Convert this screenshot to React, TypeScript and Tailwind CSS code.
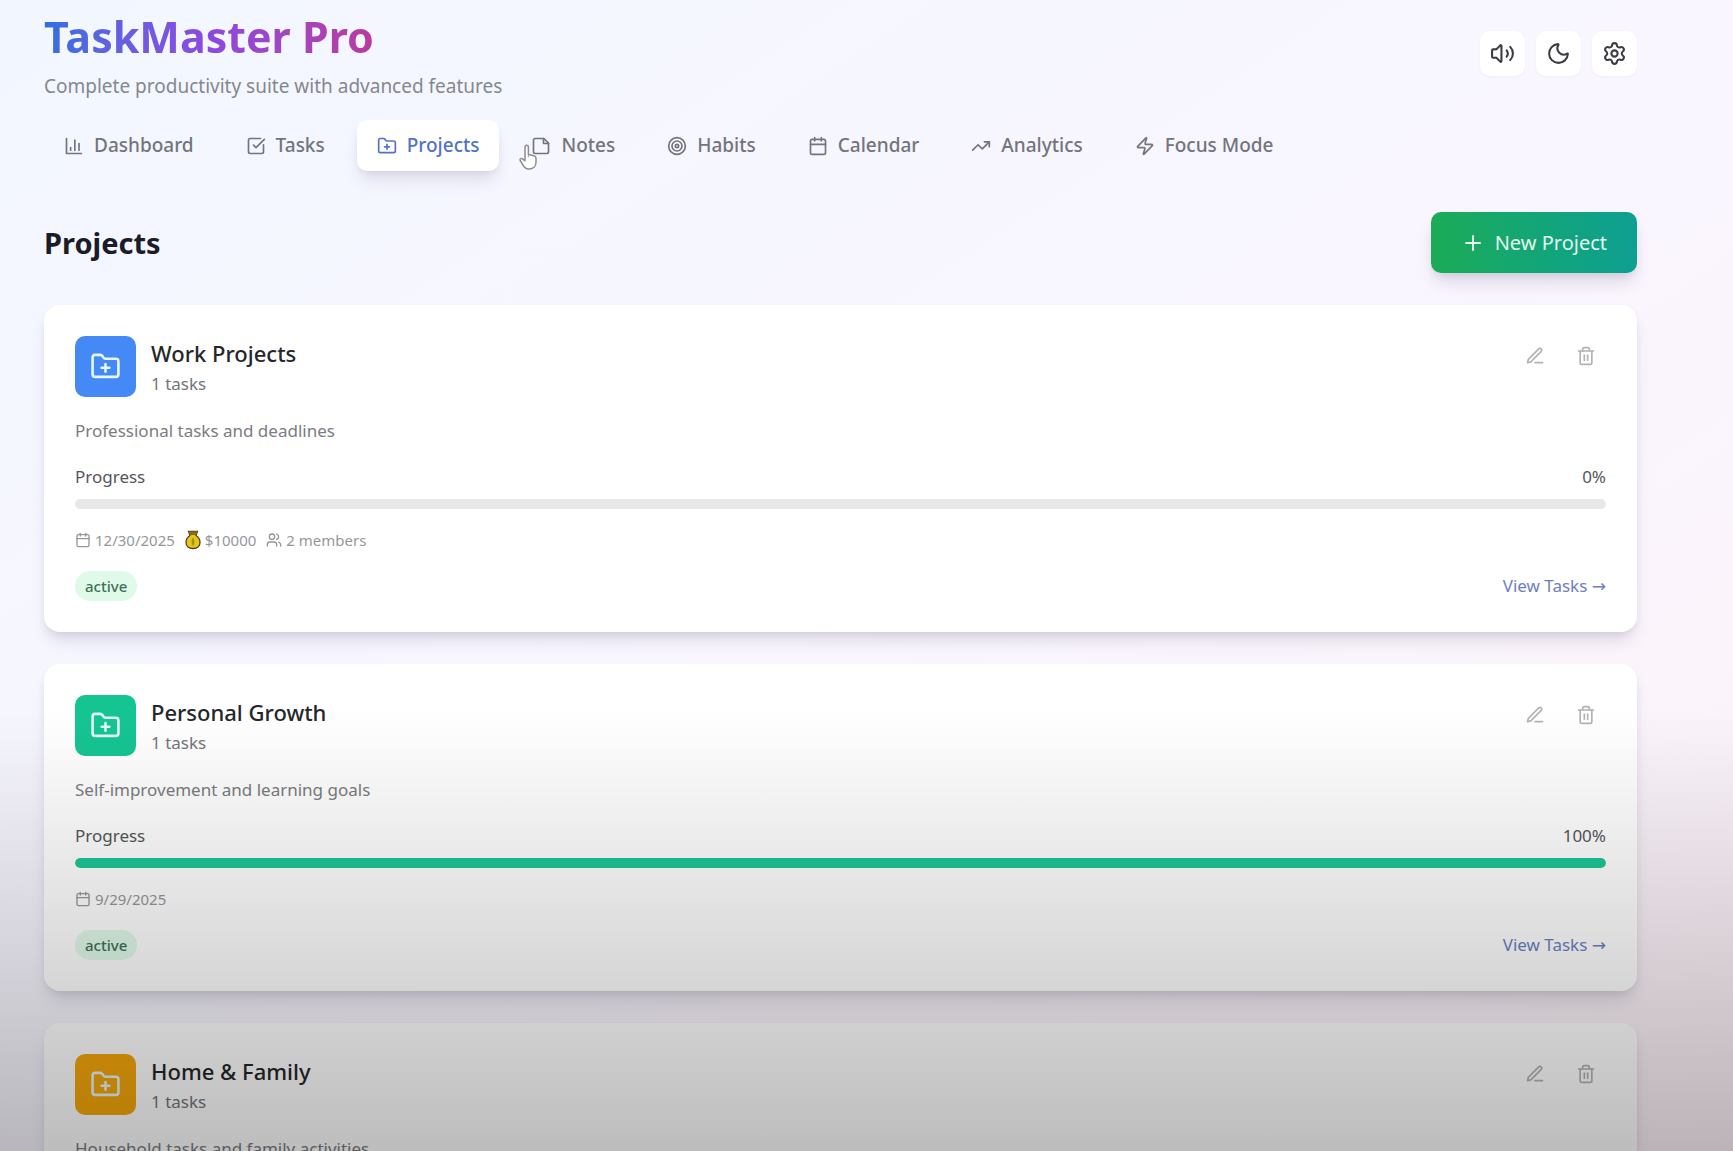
import React from "react";
import {
  Calendar,
  FolderPlus,
  Moon,
  Plus,
  Settings,
  SquareCheckBig,
  Target,
  TrendingUp,
  Users,
  Volume2,
  Zap,
} from "lucide-react";

type IconProps = { className?: string; strokeWidth?: number };

function Glyph({ className, strokeWidth = 2, children }: IconProps & { children: React.ReactNode }) {
  return (
    <svg
      viewBox="0 0 24 24"
      fill="none"
      stroke="currentColor"
      strokeWidth={strokeWidth}
      strokeLinecap="round"
      strokeLinejoin="round"
      className={className}
      aria-hidden="true"
    >
      {children}
    </svg>
  );
}

function ChartIcon(props: IconProps) {
  return (
    <Glyph {...props}>
      <path d="M3 3v18h18" />
      <path d="M18 17V9" />
      <path d="M13 17V5" />
      <path d="M8 17v-3" />
    </Glyph>
  );
}

function NoteIcon(props: IconProps) {
  return (
    <Glyph {...props}>
      <path d="M15.5 3H5a2 2 0 0 0-2 2v14a2 2 0 0 0 2 2h14a2 2 0 0 0 2-2V8.5Z" />
      <path d="M15 3v6h6" />
    </Glyph>
  );
}

function EditIcon(props: IconProps) {
  return (
    <Glyph {...props}>
      <path d="M12 20h9" />
      <path d="M16.5 3.5a2.12 2.12 0 0 1 3 3L7 19l-4 1 1-4Z" />
    </Glyph>
  );
}

function TrashIcon(props: IconProps) {
  return (
    <Glyph {...props}>
      <path d="M3 6h18" />
      <path d="M19 6v14a2 2 0 0 1-2 2H7a2 2 0 0 1-2-2V6" />
      <path d="M8 6V4a2 2 0 0 1 2-2h4a2 2 0 0 1 2 2v2" />
      <path d="M10 11v6" />
      <path d="M14 11v6" />
    </Glyph>
  );
}

function MoneyBag() {
  return (
    <svg viewBox="0 0 16 20" className="h-5 w-4" aria-label="Budget" role="img">
      <path
        d="M3.5 1.5h9l-1.5 4c2.500 1.500 4 3.800 4 6.800 0 4-2.800 6.200-7 6.200s-7-2.200-7-6.200c0-3 1.500-5.300 4-6.800z"
        fill="#e8c41c"
        stroke="#4d4320"
        strokeWidth="1.300"
      />
      <path d="M3.500 1.500h9l-1.500 3.500h-6z" fill="#8a6d1c" />
      <path d="M8 7.500c2 2 2 6.500 0 8.500c-2-2-2-6.500 0-8.500z" fill="#9a9a12" />
    </svg>
  );
}

function HandCursor() {
  return (
    <svg viewBox="0 0 18 26" className="pointer-events-none absolute -left-3 top-2 h-[26px] w-[18px]" aria-hidden="true">
      <path
        d="M6 15V3a1.700 1.700 0 0 1 3.400 0v7.500l5.600 1.200c1.500.400 2 1.200 2 2.600v3.700c0 4-2.500 7-7 7-3.500 0-5-1.700-6.300-4.300L1.200 16.500c-.6-1.400.6-2.500 2-1.800L6 16.800z"
        fill="#fff"
        stroke="#8d8d93"
        strokeWidth="1.500"
        strokeLinejoin="round"
      />
      <path d="M9.400 11v2.500" stroke="#a5a5aa" strokeWidth="1" />
    </svg>
  );
}

const tabs = [
  { label: "Dashboard", icon: ChartIcon },
  { label: "Tasks", icon: SquareCheckBig },
  { label: "Projects", icon: FolderPlus, active: true },
  { label: "Notes", icon: NoteIcon, cursor: true },
  { label: "Habits", icon: Target },
  { label: "Calendar", icon: Calendar },
  { label: "Analytics", icon: TrendingUp },
  { label: "Focus Mode", icon: Zap },
];

type Project = {
  name: string;
  about: string;
  progress: number;
  due: string;
  budget?: string;
  members?: number;
  tile: string;
  bar: string;
};

const projects: Project[] = [
  {
    name: "Work Projects",
    about: "Professional tasks and deadlines",
    progress: 0,
    due: "12/30/2025",
    budget: "$10000",
    members: 2,
    tile: "bg-[#4489f6]",
    bar: "bg-[#4489f6]",
  },
  {
    name: "Personal Growth",
    about: "Self-improvement and learning goals",
    progress: 100,
    due: "9/29/2025",
    tile: "bg-[#14c592]",
    bar: "bg-[#1cc796]",
  },
  {
    name: "Home & Family",
    about: "Household tasks and family activities",
    progress: 0,
    due: "12/30/2025",
    tile: "bg-[#f5a70b]",
    bar: "bg-[#f5a70b]",
  },
];

function ProjectCard({ project }: { project: Project }) {
  return (
    <article className="rounded-2xl bg-white px-[31px] py-[31px] shadow-[0_12px_18px_-4px_rgba(30,20,60,0.13),0_4px_8px_-3px_rgba(30,20,60,0.10)]">
      <div className="flex items-start justify-between">
        <div className="flex items-start gap-[15px]">
          <div className={`flex size-[61px] items-center justify-center rounded-[10px] text-[#e6f8fa] ${project.tile}`}>
            <FolderPlus className="size-[31px]" />
          </div>
          <div>
            <h3 className="text-[22px] leading-[34px] font-medium text-[#25262b]">{project.name}</h3>
            <p className="text-[17px] leading-7 text-[#73757a]">1 tasks</p>
          </div>
        </div>
        <div className="flex gap-[11px]">
          <button type="button" aria-label={`Edit ${project.name}`} className="p-[10px] text-[#b3b3b6]">
            <EditIcon className="size-5" />
          </button>
          <button type="button" aria-label={`Delete ${project.name}`} className="p-[10px] text-[#b3b3b6]">
            <TrashIcon className="size-5" />
          </button>
        </div>
      </div>
      <p className="mt-5 text-[17px] leading-[26px] text-[#7b7c80]">{project.about}</p>
      <div className="mt-5 flex justify-between text-[17px] leading-[26px] text-[#55565b]">
        <span>Progress</span>
        <span>{project.progress}%</span>
      </div>
      <div className="mt-[9px] h-[10px] overflow-hidden rounded-full bg-[#e8e8e8]">
        <div className={`h-full rounded-full ${project.bar}`} style={{ width: `${project.progress}%` }} />
      </div>
      <div className="mt-5 flex h-[22px] items-center gap-[10px] text-[15px] text-[#96979b]">
        <span className="flex items-center gap-1">
          <Calendar className="size-4" />
          {project.due}
        </span>
        {project.budget && (
          <span className="flex items-center gap-1">
            <MoneyBag />
            {project.budget}
          </span>
        )}
        {project.members && (
          <span className="flex items-center gap-1">
            <Users className="size-4" />
            {project.members} members
          </span>
        )}
      </div>
      <div className="mt-5 flex items-center justify-between">
        <span className="rounded-full bg-[#e0faea] px-[10px] py-1 text-[15px] leading-[22px] font-medium text-[#3f7058]">active</span>
        <a href="#tasks" className="text-[17px] leading-[26px] text-[#6d7fc2]">
          View Tasks <span className="font-['DejaVu_Sans',sans-serif]">→</span>
        </a>
      </div>
    </article>
  );
}

export default function App() {
  return (
    <div className="relative h-screen overflow-hidden bg-linear-to-br from-[#f2f7ff] via-[#f9f6ff] to-[#fdf2f8] font-['Noto_Sans','Open_Sans',sans-serif]">
      <div className="pr-24 pl-11">
        <header className="flex items-start justify-between pt-[10px]">
          <div>
            <h1 className="w-max bg-linear-to-r from-[#2f6fe0] via-[#8b48e0] to-[#b93a9e] bg-clip-text text-[43px] leading-[54px] font-bold text-transparent">
              TaskMaster Pro
            </h1>
            <p className="mt-2 text-[19px] leading-7 text-[#85878f]">Complete productivity suite with advanced features</p>
          </div>
          <div className="mt-[21px] flex gap-[11px] text-[#3c3d43]">
            {[
              { label: "Sound", Icon: Volume2 },
              { label: "Dark mode", Icon: Moon },
              { label: "Settings", Icon: Settings },
            ].map(({ label, Icon }) => (
              <button
                key={label}
                type="button"
                aria-label={label}
                className="flex size-[45px] items-center justify-center rounded-[10px] bg-white shadow-[0_1px_3px_rgba(0,0,0,0.04)]"
              >
                <Icon className="size-[25px]" />
              </button>
            ))}
          </div>
        </header>

        <nav className="mt-5 flex gap-3" aria-label="Sections">
          {tabs.map(({ label, icon: Icon, active, cursor }) => (
            <button
              key={label}
              type="button"
              className={
                active
                  ? "flex h-[51px] items-center gap-[10px] rounded-[10px] bg-white px-5 text-[19px] font-medium text-[#5373c5] shadow-[0_12px_18px_-4px_rgba(30,20,60,0.12),0_4px_8px_-3px_rgba(30,20,60,0.08)]"
                  : "flex h-[51px] items-center gap-[10px] rounded-[10px] px-5 text-[19px] font-medium text-[#73747c]"
              }
            >
              <span className="relative">
                <Icon className="size-5" />
                {cursor && <HandCursor />}
              </span>
              {label}
            </button>
          ))}
        </nav>

        <main className="mt-[41px]">
          <div className="flex items-center justify-between">
            <h2 className="text-[29px] leading-10 font-bold text-[#1b1c28]">Projects</h2>
            <button
              type="button"
              className="flex h-[61px] items-center gap-[10px] rounded-[10px] bg-linear-to-r from-[#1cab55] to-[#0f9f92] px-[30px] text-[20px] text-[#e3f8ec] shadow-[0_12px_18px_-4px_rgba(30,20,60,0.14),0_4px_8px_-3px_rgba(30,20,60,0.10)]"
            >
              <Plus className="size-6" />
              New Project
            </button>
          </div>
          <div className="mt-8 flex flex-col gap-8">
            {projects.map((project) => (
              <ProjectCard key={project.name} project={project} />
            ))}
          </div>
        </main>
      </div>
      <div className="pointer-events-none absolute inset-x-0 bottom-0 h-[440px] bg-linear-to-b from-transparent to-black/26" />
    </div>
  );
}
